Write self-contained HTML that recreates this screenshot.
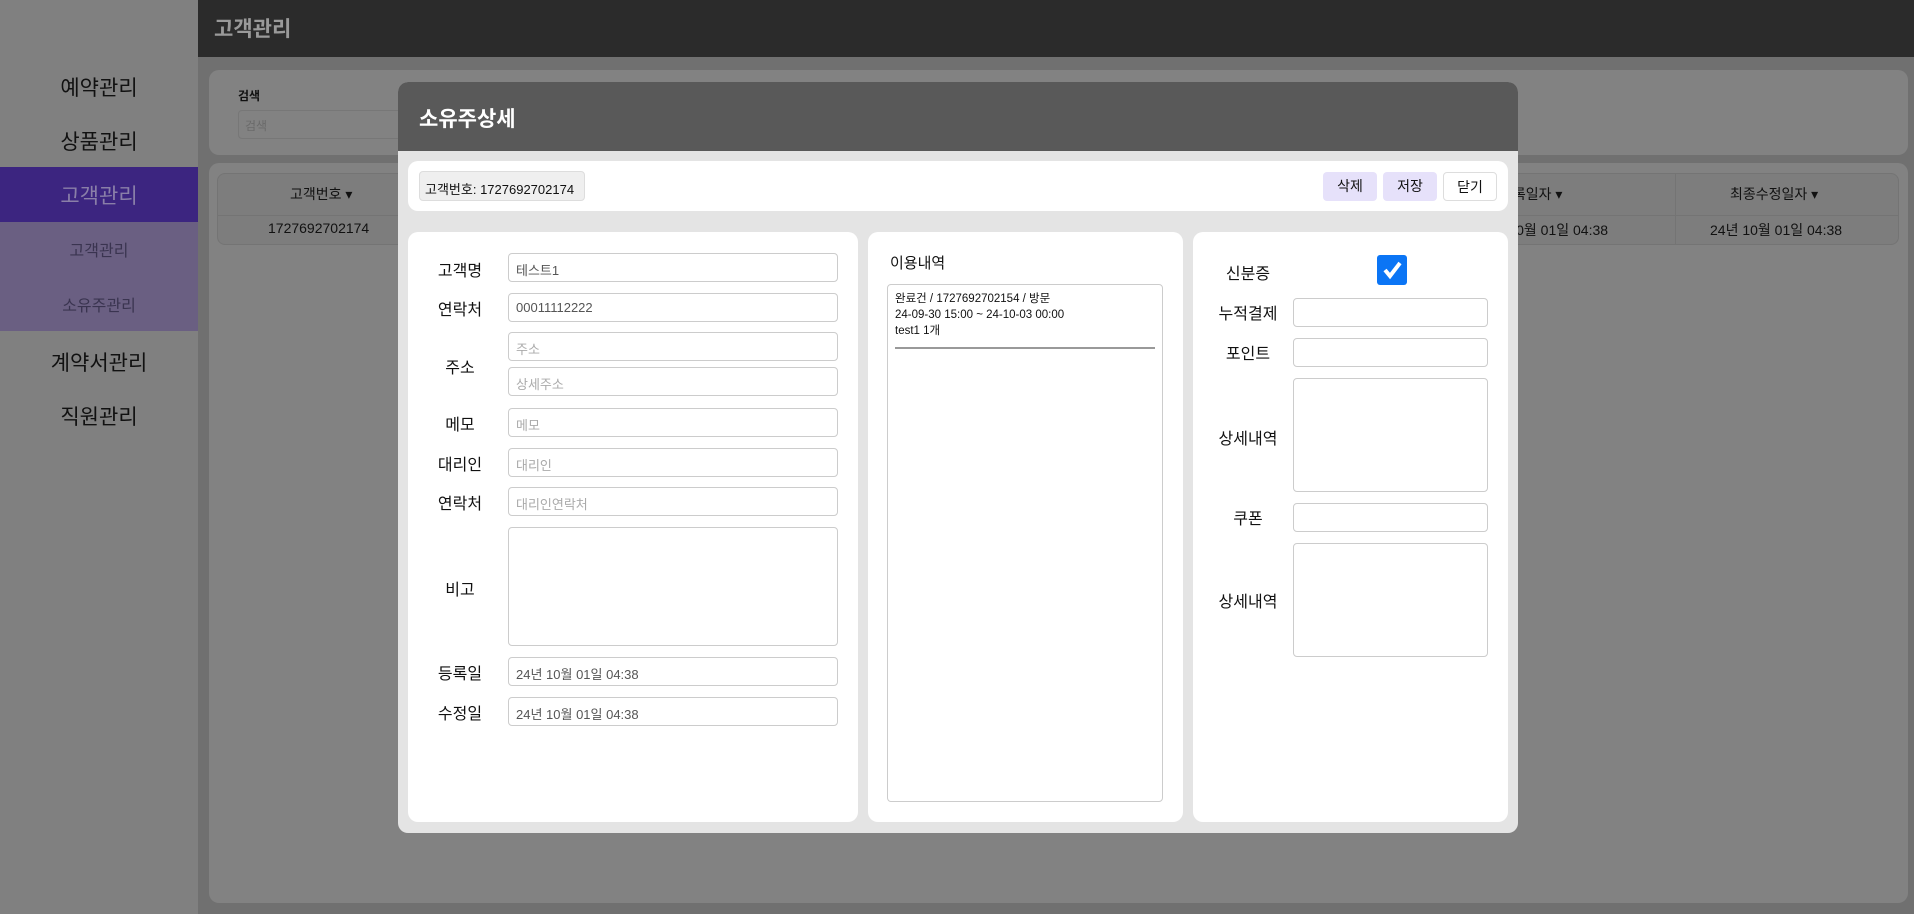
<!DOCTYPE html>
<html><head><meta charset="utf-8"><style>
*{box-sizing:border-box;margin:0;padding:0}
body{width:1914px;height:914px;overflow:hidden;background:#707070;font-family:"Liberation Sans","Noto Sans CJK KR",sans-serif;position:relative;color:#111}
.abs{position:absolute}
.side{left:0;top:0;width:198px;height:914px;background:#808080}
.mi{position:absolute;left:0;width:198px;text-align:center;font-size:21px;color:#111}
.hdr{left:198px;top:0;width:1716px;height:57px;background:#2b2b2b;color:#9a9a9a;font-weight:bold;font-size:21px;padding:13px 16px}
.card{background:#828282;border-radius:10px}
.modal{left:398px;top:82px;width:1120px;height:751px;background:#e4e4e4;border-radius:10px;overflow:hidden}
.mh{height:69px;background:#595959;color:#fff;font-weight:bold;font-size:21px;padding:21px 21px}
.wp{position:absolute;background:#fff;border-radius:10px}
.inp{position:absolute;border:1px solid #ccc;border-radius:4px;background:#fff;font-size:13px;color:#555;padding:6px 7px;height:29px}
.ph{color:#aaa}
.lb{position:absolute;font-size:16px;color:#111;text-align:center;width:90px}
.btn{position:absolute;top:11px;width:54px;height:29px;border-radius:4px;font-size:14px;text-align:center;line-height:29px;background:#e6e1fa}
</style></head><body>
<div class="abs side"></div>
<div class="mi" style="top:72px">예약관리</div>
<div class="mi" style="top:126px">상품관리</div>
<div class="abs" style="left:0;top:167px;width:198px;height:55px;background:#3c2580"></div>
<div class="mi" style="top:180px;color:#8a7fa8">고객관리</div>
<div class="abs" style="left:0;top:222px;width:198px;height:109px;background:#6a5f82"></div>
<div class="mi" style="top:237px;font-size:16px;color:#3a3450">고객관리</div>
<div class="mi" style="top:292px;font-size:16px;color:#3a3450">소유주관리</div>
<div class="mi" style="top:347px">계약서관리</div>
<div class="mi" style="top:401px">직원관리</div>
<div class="abs hdr">고객관리</div>
<div class="abs card" style="left:209px;top:70px;width:1699px;height:85px"></div>
<div class="abs" style="left:238px;top:87px;font-size:12px;font-weight:bold">검색</div>
<div class="abs" style="left:238px;top:110px;width:200px;height:29px;border:1px solid #777;border-radius:4px;font-size:12px;color:#6a6a6a;padding:6px">검색</div>
<div class="abs card" style="left:209px;top:163px;width:1699px;height:740px"></div>
<div class="abs" style="left:217px;top:173px;width:1682px;height:72px;border:1px solid #747474;border-radius:8px;background:#7d7d7d"></div>
<div class="abs" style="left:217px;top:215px;width:1682px;height:1px;background:#747474"></div>
<div class="abs" style="left:1675px;top:173px;width:1px;height:72px;background:#747474"></div>
<div class="abs" style="left:290px;top:184px;font-size:14px">고객번호 ▾</div>
<div class="abs" style="left:268px;top:220px;font-size:14px">1727692702174</div>
<div class="abs" style="left:1500px;top:184px;font-size:14px">등록일자 ▾</div>
<div class="abs" style="left:1476px;top:220px;font-size:14px">24년 10월 01일 04:38</div>
<div class="abs" style="left:1730px;top:184px;font-size:14px">최종수정일자 ▾</div>
<div class="abs" style="left:1710px;top:220px;font-size:14px">24년 10월 01일 04:38</div>

<div class="abs modal">
<div class="mh">소유주상세</div>
<div class="wp" style="left:10px;top:79px;width:1100px;height:50px">
<div class="abs" style="left:11px;top:10px;width:166px;height:30px;background:#efefef;border:1px solid #ddd;border-radius:4px;font-size:13px;padding:7px 5px">고객번호: 1727692702174</div>
<div class="btn" style="left:915px">삭제</div>
<div class="btn" style="left:975px">저장</div>
<div class="btn" style="left:1035px;background:#fff;border:1px solid #ddd">닫기</div>
</div>
<div class="wp" style="left:10px;top:150px;width:450px;height:590px">
<div class="lb" style="left:7px;top:25px">고객명</div><div class="inp" style="left:100px;top:21px;width:330px">테스트1</div>
<div class="lb" style="left:7px;top:64px">연락처</div><div class="inp" style="left:100px;top:61px;width:330px">00011112222</div>
<div class="lb" style="left:7px;top:122px">주소</div><div class="inp ph" style="left:100px;top:100px;width:330px">주소</div>
<div class="inp ph" style="left:100px;top:135px;width:330px">상세주소</div>
<div class="lb" style="left:7px;top:179px">메모</div><div class="inp ph" style="left:100px;top:176px;width:330px">메모</div>
<div class="lb" style="left:7px;top:219px">대리인</div><div class="inp ph" style="left:100px;top:216px;width:330px">대리인</div>
<div class="lb" style="left:7px;top:258px">연락처</div><div class="inp ph" style="left:100px;top:255px;width:330px">대리인연락처</div>
<div class="lb" style="left:7px;top:344px">비고</div><div class="inp" style="left:100px;top:295px;width:330px;height:119px"></div>
<div class="lb" style="left:7px;top:428px">등록일</div><div class="inp" style="left:100px;top:425px;width:330px">24년 10월 01일 04:38</div>
<div class="lb" style="left:7px;top:468px">수정일</div><div class="inp" style="left:100px;top:465px;width:330px">24년 10월 01일 04:38</div>
</div>
<div class="wp" style="left:470px;top:150px;width:315px;height:590px">
<div class="abs" style="left:22px;top:20px;font-size:15px">이용내역</div>
<div class="abs" style="left:19px;top:52px;width:276px;height:518px;border:1px solid #ccc;border-radius:4px">
<div class="abs" style="left:7px;top:6px;font-size:11.5px;line-height:16px">완료건 / 1727692702154 / 방문<br>24-09-30 15:00 ~ 24-10-03 00:00<br>test1 1개</div>
<div class="abs" style="left:7px;top:62px;width:260px;height:2px;background:#999"></div>
</div>
</div>
<div class="wp" style="left:795px;top:150px;width:315px;height:590px">
<div class="lb" style="left:10px;top:28px">신분증</div>
<div class="abs" style="left:184px;top:23px;width:30px;height:30px;background:#0b75f5;border-radius:3px"><svg width="30" height="30"><path d="M8 15 L13 21 L23 8" stroke="#fff" stroke-width="4" fill="none"/></svg></div>
<div class="lb" style="left:10px;top:68px">누적결제</div><div class="inp" style="left:100px;top:66px;width:195px"></div>
<div class="lb" style="left:10px;top:108px">포인트</div><div class="inp" style="left:100px;top:106px;width:195px"></div>
<div class="lb" style="left:10px;top:193px">상세내역</div><div class="inp" style="left:100px;top:146px;width:195px;height:114px"></div>
<div class="lb" style="left:10px;top:273px">쿠폰</div><div class="inp" style="left:100px;top:271px;width:195px"></div>
<div class="lb" style="left:10px;top:356px">상세내역</div><div class="inp" style="left:100px;top:311px;width:195px;height:114px"></div>
</div>
</div>
</body></html>
